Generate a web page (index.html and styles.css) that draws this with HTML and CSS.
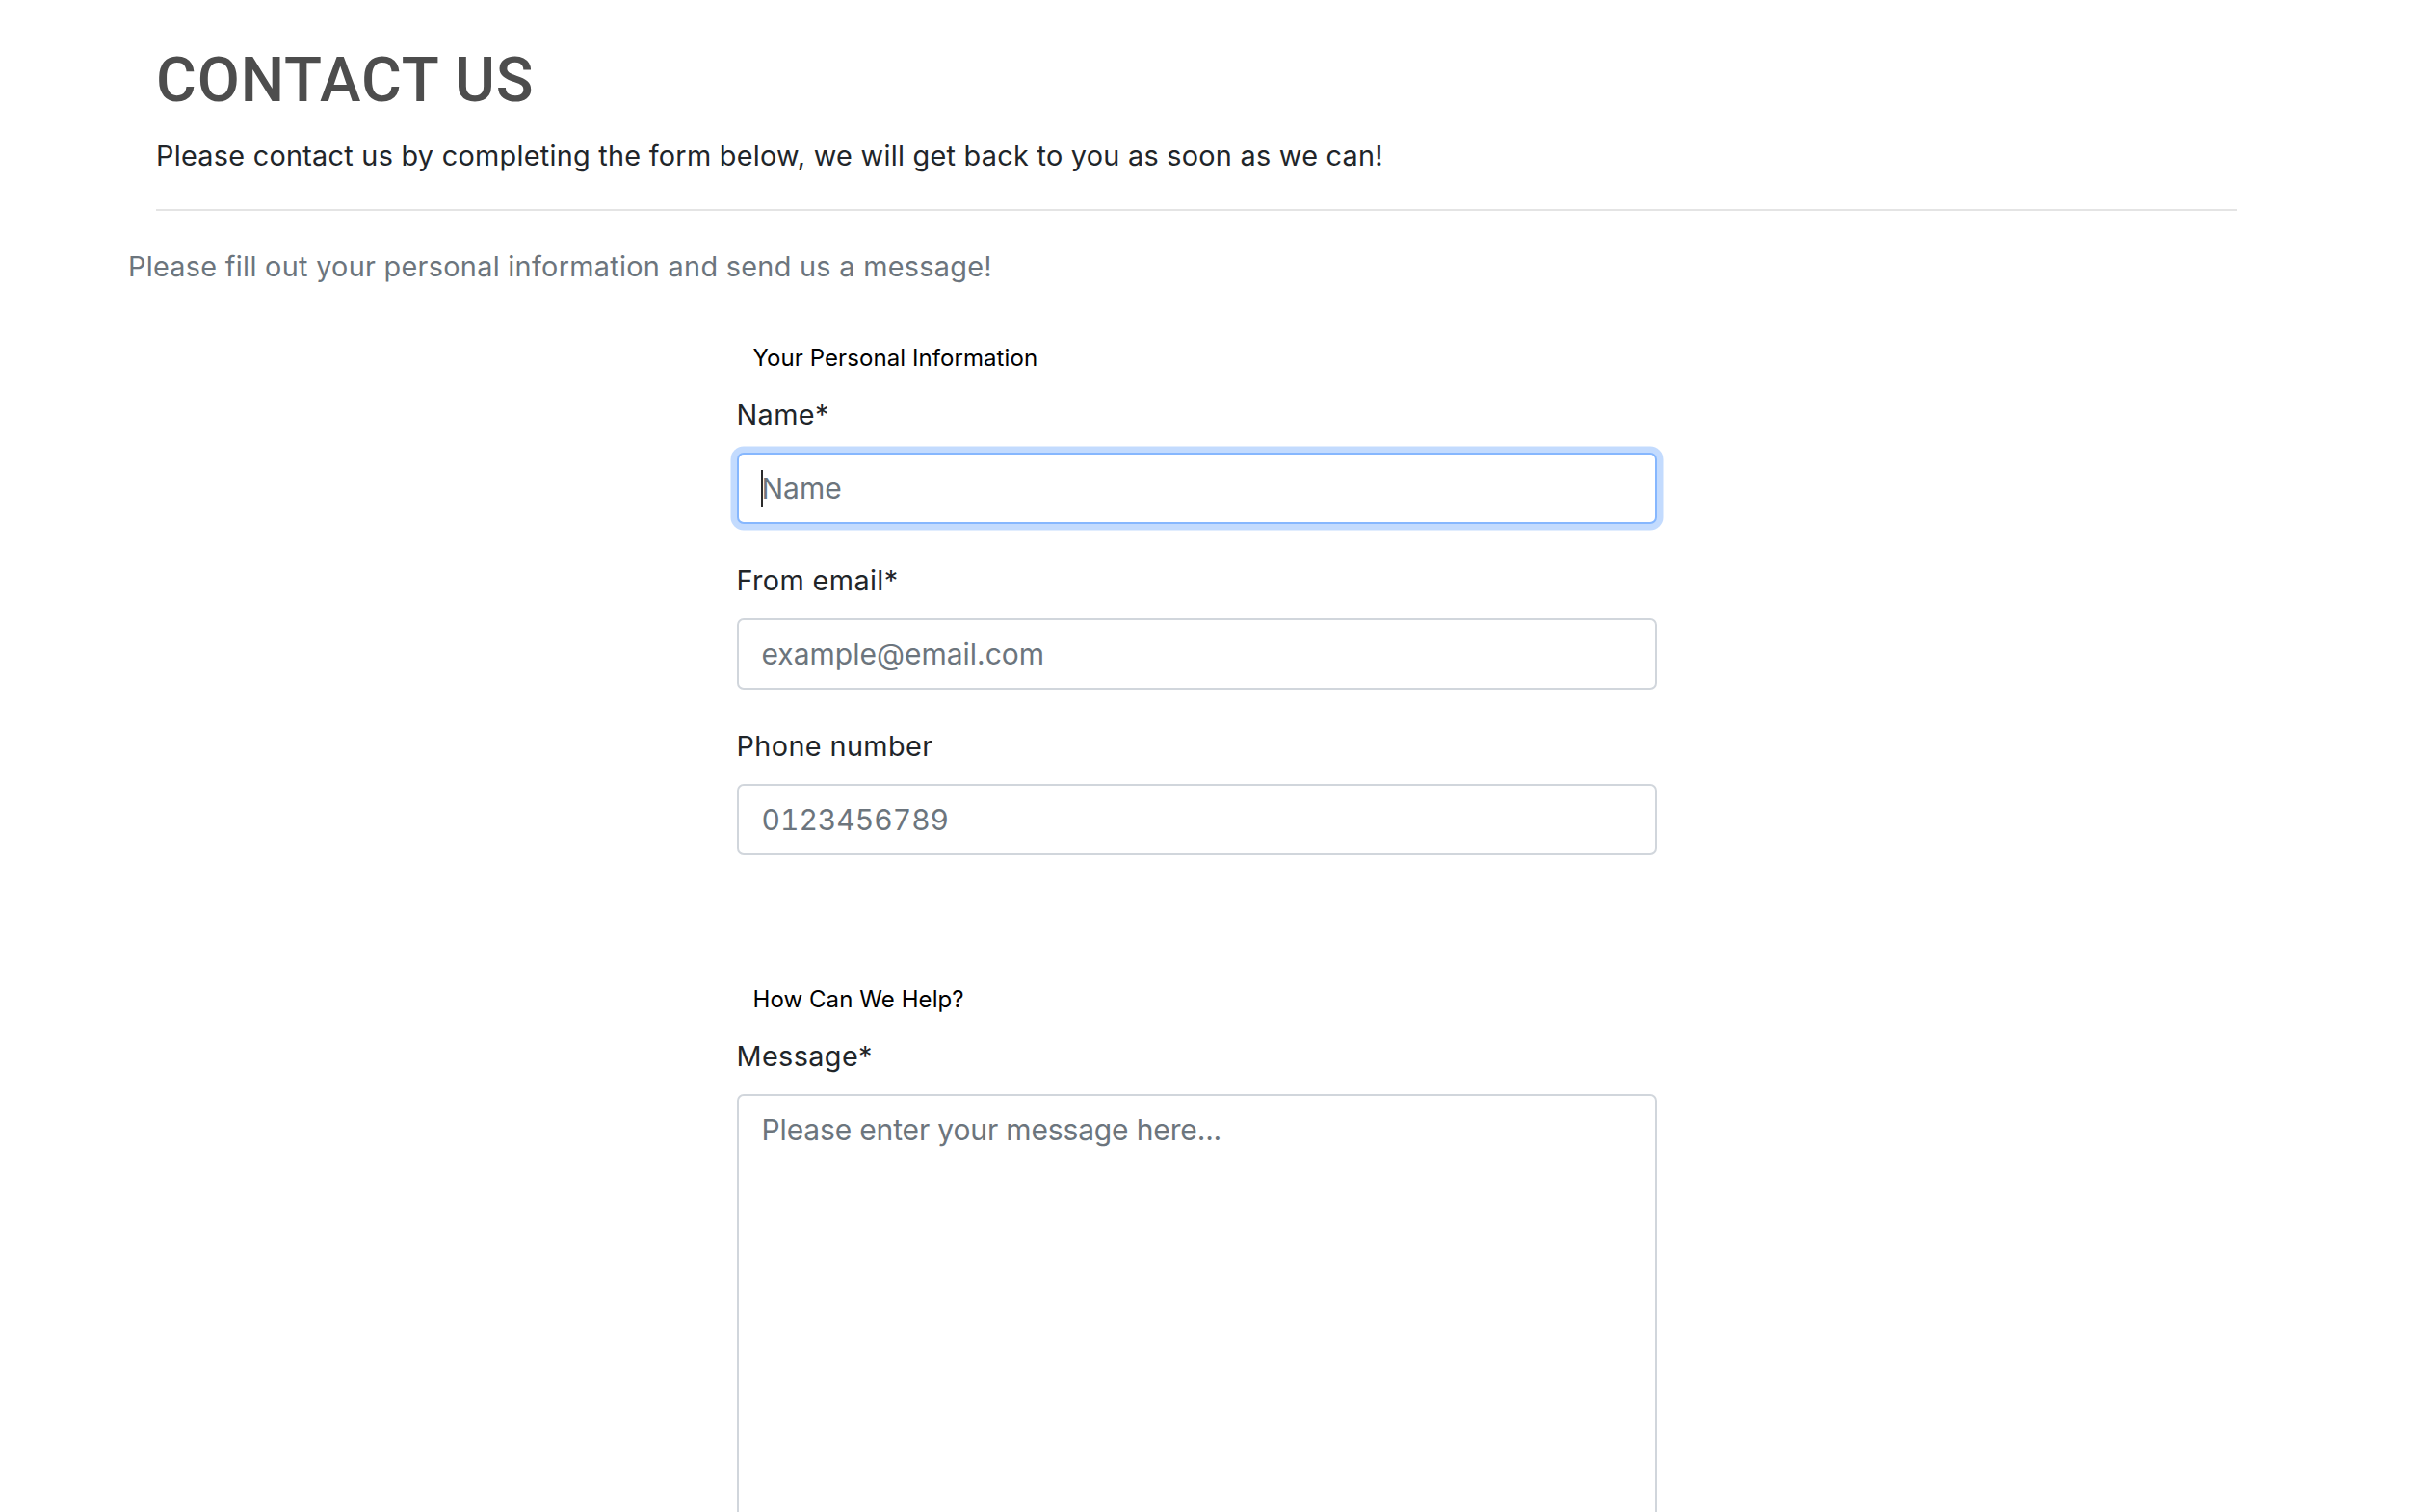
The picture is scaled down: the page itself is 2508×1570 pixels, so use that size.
FILE: index.html
```html
<!DOCTYPE html>
<html lang="en">
<head>
<meta charset="utf-8">
<title>Contact Us</title>
<link rel="stylesheet" href="styles.css">
</head>
<body>
<div class="page">
  <header class="page-header">
    <h1 class="title">CONTACT US</h1>
    <p class="lead-text">Please contact us by completing the form below, we will get back to you as soon as we can!</p>
  </header>
  <hr class="divider">
  <p class="intro">Please fill out your personal information and send us a message!</p>
  <form class="contact-form">
    <fieldset class="group">
      <legend class="group-title">Your Personal Information</legend>
      <div class="field">
        <label class="field-label" for="name">Name*</label>
        <div class="input-wrap">
          <input class="field-input is-focused" id="name" type="text" placeholder="Name">
          <span class="caret"></span>
        </div>
      </div>
      <div class="field">
        <label class="field-label" for="email">From email*</label>
        <input class="field-input" id="email" type="email" placeholder="example@email.com">
      </div>
      <div class="field">
        <label class="field-label" for="phone">Phone number</label>
        <input class="field-input field-numeric" id="phone" type="tel" placeholder="0123456789">
      </div>
    </fieldset>
    <fieldset class="group group-help">
      <legend class="group-title">How Can We Help?</legend>
      <div class="field">
        <label class="field-label" for="message">Message*</label>
        <textarea class="field-input field-textarea" id="message" placeholder="Please enter your message here..."></textarea>
      </div>
    </fieldset>
  </form>
</div>
</body>
</html>
```
FILE: styles.css
```css
html {
  overflow: hidden;
}

body {
  margin: 0;
  background: #ffffff;
  font-family: Inter, Roboto, "Liberation Sans", Arial, sans-serif;
  color: #212529;
}

.page {
  width: 2160px;
  margin-left: 162px;
}

.page-header {
  padding-top: 45px;
}

.title {
  margin: 0 0 18px;
  font-family: Roboto, "Liberation Sans", Arial, sans-serif;
  font-size: 64px;
  line-height: 77px;
  font-weight: 500;
  letter-spacing: 0.9px;
  color: #4d4d4d;
}

.lead-text {
  margin: 0;
  font-size: 28.8px;
  line-height: 43px;
  letter-spacing: 0.28px;
  color: #212529;
}

.divider {
  margin: 34px 0 0;
  border: 0;
  height: 2px;
  background: #e4e4e4;
}

.intro {
  margin: 36px 0 0 -29px;
  font-size: 28.8px;
  line-height: 43px;
  letter-spacing: 0.31px;
  color: #6c757d;
}

.contact-form {
  width: 955px;
  margin: 57px auto 0;
}

.group {
  margin: 0;
  padding: 0;
  border: 0;
  min-width: 0;
}

.group-help {
  margin-top: 133px;
}

.group-title {
  padding: 0 0 0 17px;
  font-size: 24px;
  line-height: 34px;
  letter-spacing: 0.08px;
  color: #000000;
}

.field {
  display: flex;
  flex-direction: column;
  margin-top: 38px;
}

.group-title + .field {
  margin-top: 21px;
}

.field-label {
  display: block;
  margin-bottom: 17px;
  padding-bottom: 2px;
  font-size: 28.8px;
  line-height: 41px;
  letter-spacing: 0.4px;
  color: #212529;
}

.input-wrap {
  position: relative;
}

.field-input {
  display: block;
  box-sizing: border-box;
  width: 100%;
  height: 74px;
  margin: 0;
  padding: 11px 24px;
  border: 2px solid #d1d6dc;
  border-radius: 7px;
  background: #ffffff;
  font-family: Inter, Roboto, "Liberation Sans", Arial, sans-serif;
  font-size: 30px;
  line-height: 48px;
  color: #212529;
  outline: none;
}

.field-input::placeholder {
  color: #6c757d;
  opacity: 1;
}

.field-numeric {
  font-variant-numeric: tabular-nums;
}

.field-input.is-focused {
  border-color: #86b7fe;
  box-shadow: 0 0 0 6.5px #c3dbfe;
}

.caret {
  position: absolute;
  left: 25px;
  top: 18px;
  width: 2px;
  height: 38px;
  background: #2b2b2b;
}

.field-textarea {
  height: 620px;
  letter-spacing: -0.15px;
  resize: vertical;
}
```
